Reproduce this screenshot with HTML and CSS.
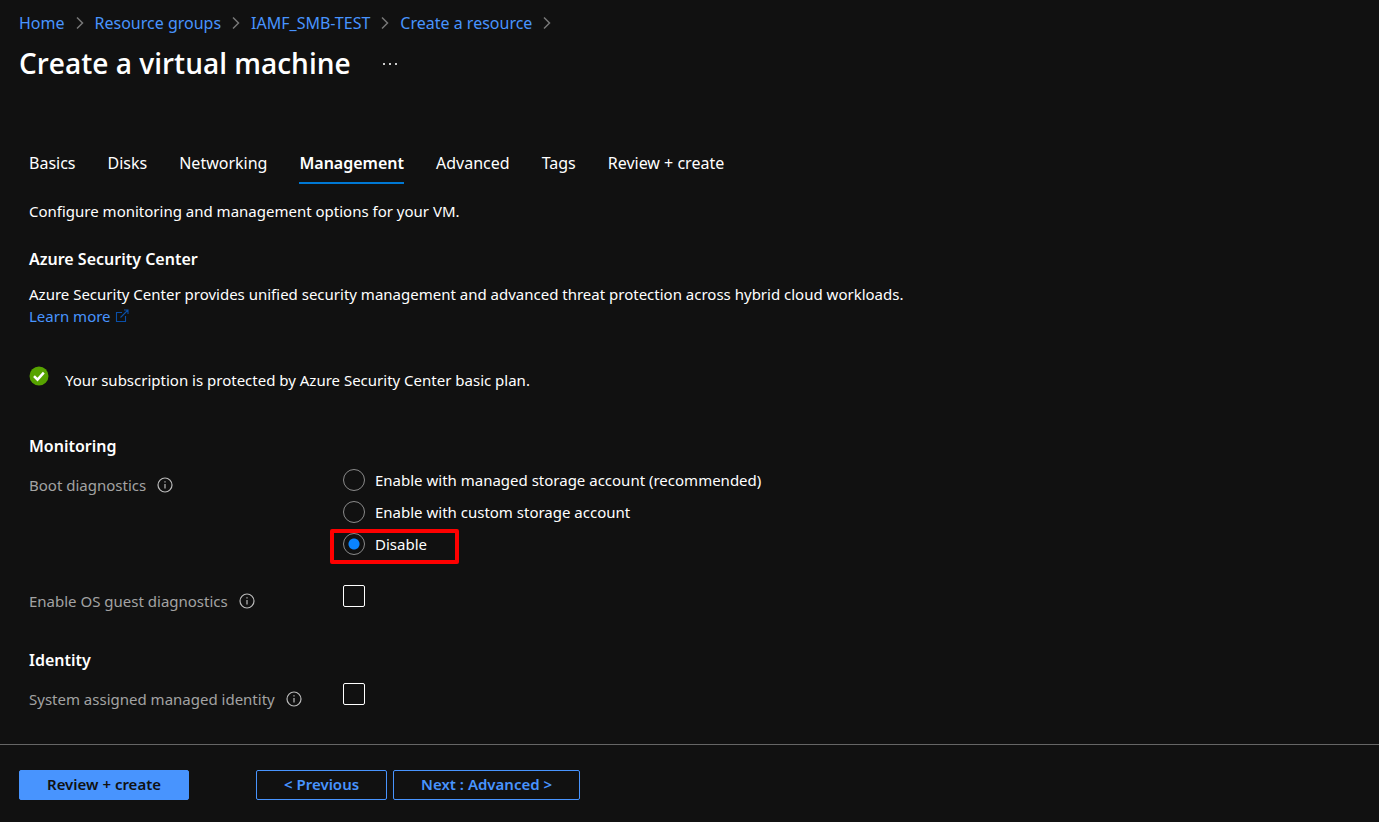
FILE: index.html
```
<!DOCTYPE html>
<html lang="en">
<head>
<meta charset="utf-8">
<meta name="viewport" content="width=device-width, initial-scale=1">
<title>Create a virtual machine</title>
<link rel="stylesheet" href="styles.css">
</head>
<body>
<svg class="sprite" aria-hidden="true">
  <symbol id="chevron" viewBox="0 0 8 14"><path d="M1 1.500l5.500 5.500L1 12.500" fill="none" stroke="currentColor" stroke-width="1.500"/></symbol>
  <symbol id="info" viewBox="0 0 16 16"><circle cx="8" cy="8" r="7" fill="none" stroke="currentColor" stroke-width="1.2"/><path d="M8 7v4.500M8 4.200v1.400" stroke="currentColor" stroke-width="1.200"/></symbol>
</svg>
<div class="page">
  <header class="header">
    <nav class="breadcrumb" aria-label="Breadcrumb">
      <a href="#">Home</a><svg class="chevron"><use href="#chevron"/></svg>
      <a href="#">Resource groups</a><svg class="chevron"><use href="#chevron"/></svg>
      <a href="#">IAMF_SMB-TEST</a><svg class="chevron"><use href="#chevron"/></svg>
      <a href="#">Create a resource</a><svg class="chevron"><use href="#chevron"/></svg>
    </nav>
    <div class="title-row">
      <h1 class="title">Create a virtual machine</h1>
      <button class="more" type="button" aria-label="More actions"><svg class="dots" viewBox="0 0 14 2"><path d="M0 0h2v2H0zM6 0h2v2H6zM12 0h2v2h-2z" fill="currentColor"/></svg></button>
    </div>
  </header>

  <main class="content">
    <nav class="tabs" aria-label="Steps">
      <a class="tab" href="#">Basics</a>
      <a class="tab" href="#">Disks</a>
      <a class="tab" href="#">Networking</a>
      <a class="tab tab-active" href="#" aria-current="step">Management</a>
      <a class="tab" href="#">Advanced</a>
      <a class="tab" href="#">Tags</a>
      <a class="tab" href="#">Review + create</a>
    </nav>
    <p class="intro">Configure monitoring and management options for your VM.</p>

    <section class="section">
      <h2 class="heading">Azure Security Center</h2>
      <p class="text">Azure Security Center provides unified security management and advanced threat protection across hybrid cloud workloads.<br>
        <a class="learn" href="#">Learn more <svg class="external" viewBox="0 0 14 14"><path d="M7 3.500H1.500v9h9V7M5.500 8.500l7.500-7.500M9 1h4v4" fill="none" stroke="currentColor" stroke-width="1.100"/></svg></a></p>
      <div class="status">
        <svg class="check" viewBox="0 0 20 20"><circle cx="10" cy="10" r="9.500" fill="#57a300"/><path d="M5 10.200l3.500 3.500 6.300-7" fill="none" stroke="#fff" stroke-width="2.500"/></svg>
        <p class="text">Your subscription is protected by Azure Security Center basic plan.</p>
      </div>
    </section>

    <section class="section">
      <h2 class="heading">Monitoring</h2>
      <div class="row" role="radiogroup" aria-labelledby="boot">
        <div class="label"><span id="boot">Boot diagnostics</span><svg class="info"><use href="#info"/></svg></div>
        <div class="options">
          <label class="option"><input class="radio" type="radio" name="boot">Enable with managed storage account (recommended)</label>
          <label class="option"><input class="radio" type="radio" name="boot">Enable with custom storage account</label>
          <label class="option option-marked"><input class="radio" type="radio" name="boot" checked>Disable</label>
        </div>
      </div>
      <div class="row row-spaced">
        <div class="label"><label for="guest">Enable OS guest diagnostics</label><svg class="info"><use href="#info"/></svg></div>
        <input class="checkbox" type="checkbox" id="guest">
      </div>
    </section>

    <section class="section section-spaced">
      <h2 class="heading">Identity</h2>
      <div class="row">
        <div class="label"><label for="identity">System assigned managed identity</label><svg class="info"><use href="#info"/></svg></div>
        <input class="checkbox" type="checkbox" id="identity">
      </div>
    </section>
  </main>

  <footer class="footer">
    <button class="button button-primary" type="button">Review + create</button>
    <div class="steps">
      <button class="button" type="button">&lt; Previous</button>
      <button class="button" type="button">Next : Advanced &gt;</button>
    </div>
  </footer>
</div>
</body>
</html>
```
FILE: styles.css
```
* { box-sizing: border-box; }
body {
  margin: 0;
  background: #111;
  color: #fff;
  font-family: "Segoe UI", "Noto Sans", "Open Sans", sans-serif;
  font-size: 15px;
  line-height: 22px;
}
h1, h2, p { margin: 0; }
a { color: #4894fe; text-decoration: none; }
.sprite { position: absolute; width: 0; height: 0; }
.page { display: flex; flex-direction: column; min-height: 100vh; }

.header { padding: 11px 19px 0; }
.breadcrumb { display: flex; flex-wrap: wrap; align-items: center; gap: 11px; font-size: 16px; line-height: 24px; }
.chevron { width: 8px; height: 14px; color: #777; }
.title-row { display: flex; align-items: center; gap: 32px; margin-top: 8px; }
.title { font-family: "Segoe UI", "Open Sans", sans-serif; font-size: 28px; line-height: 40px; font-weight: 600; }
.more { display: flex; padding: 2px 0 0; border: 0; background: none; color: #ccc; }
.dots { width: 14px; height: 2px; }

.content { flex: 1; padding: 68px 29px 32px; }
.tabs { display: flex; flex-wrap: wrap; gap: 32px; font-size: 16px; line-height: 24px; }
.tab { padding-bottom: 7px; border-bottom: 2px solid transparent; color: #fff; }
.tab-active { border-color: #0078d4; font-weight: 600; }
.intro { margin-top: 16px; }
.section { margin-top: 25px; }
.section-spaced { margin-top: 36px; }
.heading { font-size: 16px; line-height: 24px; font-weight: 600; }
.heading + .text { margin-top: 12px; }
.external { width: 14px; height: 14px; margin-left: 1px; vertical-align: -1px; color: #0a4fa8; }
.status { display: flex; gap: 16px; margin-top: 39px; padding-bottom: 18px; }
.status .text { padding-top: 3px; }
.check { width: 20px; height: 20px; }

.row { display: grid; grid-template-columns: 314px 1fr; align-items: start; margin-top: 11px; }
.row-spaced { margin-top: 30px; }
.label { display: flex; align-items: center; gap: 11px; padding-top: 5px; color: #a3a3a3; }
.info { width: 16px; height: 16px; color: #bbb; }
.options { display: grid; gap: 10px; justify-items: start; }
.option { position: relative; display: flex; align-items: center; gap: 10px; }
.option-marked::after {
  content: "";
  position: absolute;
  inset: -4px -32px -9px -13px;
  border: 4px solid #f00;
  border-radius: 2px;
}
.radio, .checkbox { appearance: none; width: 22px; height: 22px; margin: 0; border: 1px solid #8a8a8a; }
.radio { border-radius: 50%; }
.radio:checked { background: radial-gradient(circle, #0a84ff 5px, transparent 6px); }
.checkbox { border-color: #fff; border-radius: 2px; }

.footer { display: flex; flex-wrap: wrap; gap: 67px; padding: 25px 19px 22px; border-top: 1px solid #666; }
.steps { display: flex; gap: 6px; }
.button {
  height: 30px;
  padding: 0 27px 2px;
  border: 1px solid #4894fe;
  border-radius: 2px;
  background: transparent;
  color: #4894fe;
  font: 600 15px/20px "Segoe UI", "Noto Sans", "Open Sans", sans-serif;
}
.button-primary { background: #4894fe; color: #111; }
```
